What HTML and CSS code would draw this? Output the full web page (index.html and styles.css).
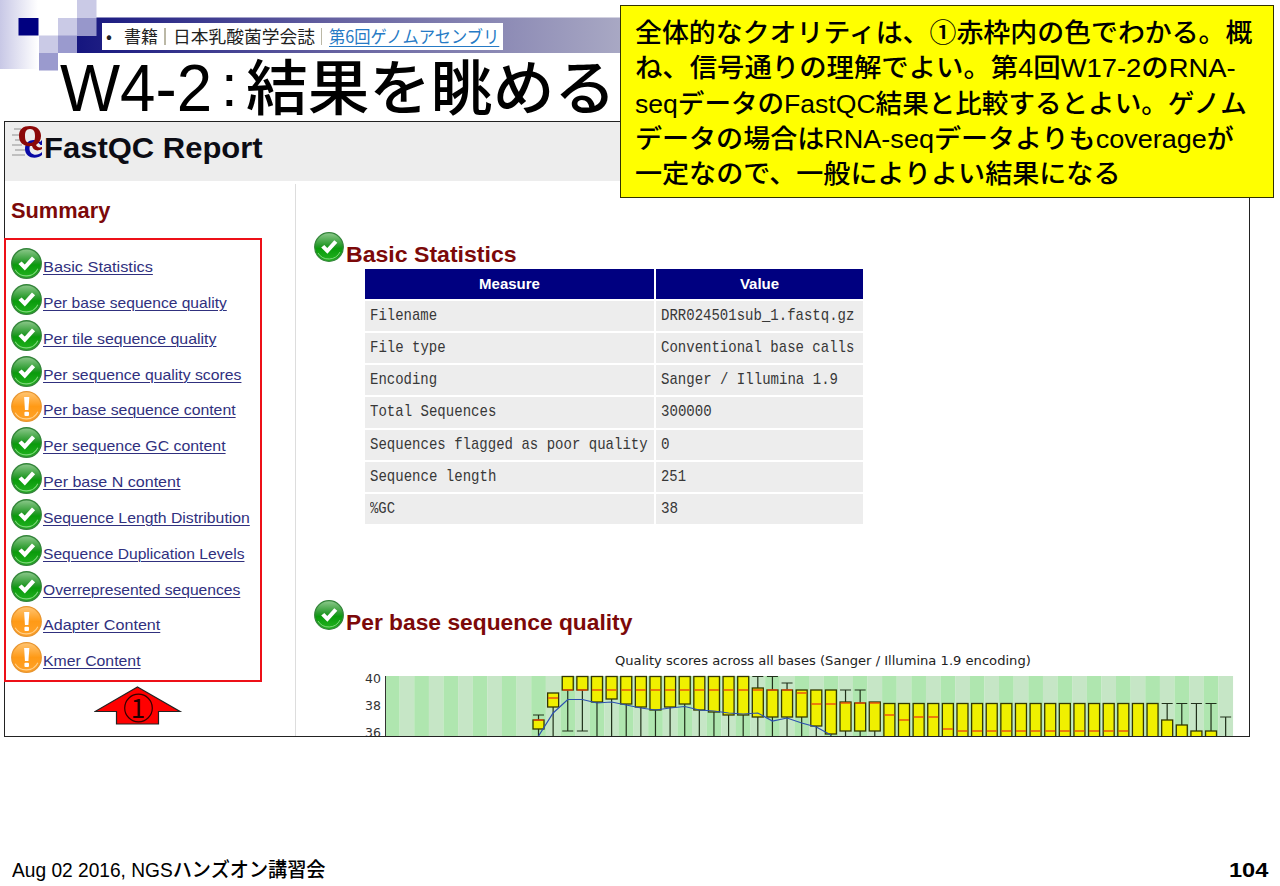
FILE: index.html
```html
<!DOCTYPE html>
<html lang="ja">
<head>
<meta charset="utf-8">
<title>FastQC Report</title>
<link rel="stylesheet" href="styles.css">
</head>
<body>
<svg class="defs" width="0" height="0" aria-hidden="true">
  <defs>
    <linearGradient id="green" x1="0" y1="0" x2="0" y2="1"><stop offset="0" stop-color="#8ec98d"/><stop offset=".45" stop-color="#279a2a"/><stop offset=".55" stop-color="#0a9b0c"/><stop offset="1" stop-color="#22b31f"/></linearGradient>
    <linearGradient id="orange" x1="0" y1="0" x2="0" y2="1"><stop offset="0" stop-color="#ffc573"/><stop offset=".5" stop-color="#ff9a16"/><stop offset="1" stop-color="#ffa22a"/></linearGradient>
    <symbol id="ok" viewBox="0 0 30 30">
      <circle cx="15" cy="15" r="14.3" fill="url(#green)" stroke="#34853a" stroke-width="1.3"/>
      <path d="M4 21a12.6 12.6 0 0 0 22-1" fill="none" stroke="#7fd57c" stroke-width="1"/>
      <path d="M7.2 15.600l3.100-2.600 3 3 7-7.800 3 2.600-9.900 11z" fill="#fff"/>
    </symbol>
    <symbol id="warn" viewBox="0 0 30 30">
      <circle cx="15" cy="15" r="14.3" fill="url(#orange)" stroke="#e8952f" stroke-width="1.2"/>
      <path d="M4 21a12.6 12.6 0 0 0 22-1" fill="none" stroke="#ffd28f" stroke-width="1"/>
      <path d="M12.7 5.8h5l-.8 12.6h-3.4z" fill="#fff"/><rect x="13" y="20" width="4.4" height="4.2" rx="1" fill="#fff"/>
    </symbol>
  </defs>
</svg>
<main class="slide">
  <svg class="deco" width="640" height="72" viewBox="0 0 640 72">
    <defs>
      <linearGradient id="fade"><stop offset="0" stop-color="#c8c8e6"/><stop offset="1" stop-color="#fff"/></linearGradient>
      <linearGradient id="bar"><stop offset="0" stop-color="#15157f"/><stop offset=".45" stop-color="#6460a0"/><stop offset="1" stop-color="#adadc6"/></linearGradient>
    </defs>
    <rect width="38" height="69" fill="url(#fade)"/>
    <rect x="77" y="17.5" width="563" height="35.5" fill="url(#bar)"/>
    <rect x="18.5" y="18" width="20" height="17.5" fill="#000080"/>
    <rect x="77" y="0" width="19.500" height="18" fill="#cacae6"/>
    <rect x="77" y="18" width="19.500" height="18" fill="#9797cb"/>
    <rect x="58" y="18" width="19" height="18" fill="#cacae6"/>
    <rect x="39" y="35.500" width="19" height="17.500" fill="#cacae6"/>
    <rect x="58" y="35.500" width="19" height="17.500" fill="#9a9ace"/>
    <rect x="39" y="53" width="19" height="17.500" fill="#9a9ace"/>
  </svg>
  <div class="crumbs"><span class="dot">•</span><span class="fit" data-w="34">書籍</span><i></i><span class="fit" data-w="142">日本乳酸菌学会誌</span><i></i><a class="fit" data-w="170">第6回ゲノムアセンブリ</a></div>
  <h1 class="title"><span class="fit latin" data-w="152">W4-2</span><span class="colon">:</span><span class="fit" data-w="370">結果を眺める</span></h1>

  <section class="report">
    <header class="report-head">
      <svg class="logo" width="32" height="36" viewBox="0 0 32 36">
        <path d="M2 4h7M0 10h9M3 15h8M0 20h10M3 25h10M0 30h13" stroke="#b0b0b0" stroke-width="1.300"/>
        <path d="M30 15v5h-1.500c-3-5-11-4-11 3.500 0 7 8 8 12.500 3.500v3c-6 5-17 3-17-6 0-9 9-11 15-7z" fill="#0909a5"/>
        <path fill-rule="evenodd" d="M18 1c7 0 11 4 11 10 0 4-2 7-5 9 1 2 3 3 6 2v2c-5 3-9 1-10-3C12 22 7 18 7 11S11 1 18 1zm0 3c-4 0-5 3-5 7s1 7 5 7 5-3 5-7-1-7-5-7z" fill="#8b0808"/>
      </svg>
      <span class="fit" data-w="219">FastQC Report</span>
    </header>
    <div class="report-body">
      <nav class="summary">
        <h2><span class="fit" data-w="99">Summary</span></h2>
        <ul id="links"></ul>
      </nav>
      <div class="content">
        <h2 class="module"><svg width="30" height="30"><use href="#ok"/></svg><span class="fit" data-w="171">Basic Statistics</span></h2>
        <table>
          <thead><tr><th><span class="fit" data-w="61">Measure</span></th><th><span class="fit" data-w="39">Value</span></th></tr></thead>
          <tbody id="stats"></tbody>
        </table>
        <h2 class="module second"><svg width="30" height="30"><use href="#ok"/></svg><span class="fit" data-w="286">Per base sequence quality</span></h2>
        <div class="chart-title"><span class="fit" data-w="416">Quality scores across all bases (Sanger / Illumina 1.9 encoding)</span></div>
        <svg id="chart" width="890" height="66" viewBox="360 670 890 66"></svg>
      </div>
    </div>
  </section>

  <div class="frame"></div>
  <svg class="arrow" width="90" height="42" viewBox="0 0 90 42">
    <path d="M43.500 2L86 26.500H64.500V39H22.500V26.500H1Z" fill="#f00" stroke="#222" stroke-width="1.200"/>
    <circle cx="44.500" cy="23" r="13.800" fill="none" stroke="#300" stroke-width="1.200"/>
    <text x="44" y="32.500" text-anchor="middle">1</text>
  </svg>
  <aside class="note">
    <p><span class="fit" data-w="617">全体的なクオリティは、①赤枠内の色でわかる。概</span></p>
    <p><span class="fit" data-w="601">ね、信号通りの理解でよい。第4回W17-2のRNA-</span></p>
    <p><span class="fit" data-w="612">seqデータのFastQC結果と比較するとよい。ゲノム</span></p>
    <p><span class="fit" data-w="599">データの場合はRNA-seqデータよりもcoverageが</span></p>
    <p><span class="fit" data-w="485">一定なので、一般によりよい結果になる</span></p>
  </aside>
  <footer class="foot"><span class="fit" data-w="314">Aug 02 2016, NGSハンズオン講習会</span><b class="fit" data-w="39">104</b></footer>
</main>
<script src="page.js"></script>
</body>
</html>
```
FILE: styles.css
```css
* { box-sizing: border-box; }
body { margin: 0; background: #fff; font-family: "Liberation Sans", "Noto Sans CJK JP", sans-serif; color: #000; }
.defs, .deco { position: absolute; left: 0; top: 0; }
.slide { position: relative; width: 1280px; height: 886px; overflow: hidden; display: flex; flex-direction: column; }
.fit { display: inline-block; white-space: nowrap; transform-origin: 0 50%; }
.crumbs { position: relative; z-index: 1; display: flex; width: 401px; height: 27px; margin: 23px 0 0 102px; padding-left: 4px; background: #fff; font: 17.500px/25px "Noto Sans CJK JP", sans-serif; color: #222; flex: none; }
.crumbs .dot { width: 18px; }
.crumbs i { width: 1.500px; height: 17px; margin: 5px 7px 0 6px; background: #bbb8a6; flex: none; }
.crumbs a { color: #267ac5; text-decoration: underline; text-underline-offset: 3px; }
.title { position: relative; display: flex; height: 71px; margin: 0 0 0 60px; font: 500 60px/71px "Noto Sans CJK JP", sans-serif; flex: none; }
.title .latin { font: 400 67px/75px "Liberation Sans", sans-serif; }
.title .colon { width: 34px; padding-left: 9px; font: 400 60px/71px "Liberation Sans", sans-serif; }
.title .fit:last-child { line-height: 67px; }
.report { width: 1246px; height: 616px; margin-left: 4px; border: 1.300px solid #222; overflow: hidden; flex: none; background: #fff; }
.report-head { display: flex; height: 59px; background: #ededed; padding: 3px 0 0 7px; font: 700 30px/46px "Liberation Sans", sans-serif; color: #0c0c14; }
.logo { flex: none; }
.report-body { display: flex; height: 556px; }
.summary { width: 291px; margin-top: 3px; padding-left: 6px; border-right: 1.500px solid #ddd; flex: none; }
h2 { margin: 0; font: 700 22px/30px "Liberation Sans", sans-serif; color: #7c0909; }
.summary h2 { padding-top: 12px; height: 64px; }
.summary ul { margin: 0; padding: 0; list-style: none; }
.summary li { display: flex; height: 35.850px; }
.summary li svg { width: 31px; height: 31px; flex: none; margin-right: 1px; }
.summary a { font: 15px/19px "Liberation Sans", sans-serif; color: #30307e; text-decoration: underline; text-decoration-thickness: 1px; text-underline-offset: 1.500px; margin-top: 9px; height: 20px; }
.content { padding: 51px 0 0 18px; width: 953px; }
.module { display: flex; height: 37px; align-items: flex-start; }
.module svg { flex: none; margin-right: 2px; }
.module .fit { margin-top: 8px; }
table { margin-left: 51px; border-collapse: separate; border-spacing: 0; width: 498px; table-layout: fixed; }
th { height: 30px; padding: 0; background: #000080; color: #fff; font: 700 15px/20px "Liberation Sans", sans-serif; }
th:first-child, td:first-child { width: 291px; border-right: 2px solid #fff; }
td { height: 32.150px; padding: 0 0 0 5px; background: #ededed; border-top: 2px solid #fff; font: 17px/26px "Liberation Mono", monospace; color: #383838; }
td .fit { vertical-align: top; }
.second { margin-top: 76px; }
.chart-title { margin: 15px 0 0 301px; height: 18px; font: 12.500px/18px "DejaVu Sans", sans-serif; color: #222; }
#chart { display: block; margin-left: 46px; }
#chart text { font: 12.500px "DejaVu Sans", sans-serif; fill: #333; }
.frame { position: absolute; left: 4px; top: 238px; width: 258px; height: 444px; border: 2.500px solid #ed1018; }
.arrow { position: absolute; left: 94px; top: 685px; }
.arrow text { font: 26px "Noto Sans CJK JP", sans-serif; fill: #200; }
.note { position: absolute; left: 620px; top: 5px; width: 654px; height: 193px; padding: 10px 0 0 14px; background: #ff0; border: 1.500px solid #333300; }
.note p { margin: 0; height: 35.300px; font: 500 26px/35.300px "Liberation Sans", "Noto Sans CJK JP", sans-serif; }
.foot { display: flex; justify-content: space-between; padding: 0 12px; margin-top: 118px; font: 500 20px/30px "Liberation Sans", "Noto Sans CJK JP", sans-serif; }
.foot b { transform-origin: 100% 50%; }
```
FILE: page.js
```js
const links = [
  ['Basic Statistics', 110], ['Per base sequence quality', 184], ['Per tile sequence quality', 173],
  ['Per sequence quality scores', 198], ['Per base sequence content', 193, 1], ['Per sequence GC content', 183],
  ['Per base N content', 137], ['Sequence Length Distribution', 207], ['Sequence Duplication Levels', 201],
  ['Overrepresented sequences', 197], ['Adapter Content', 117, 1], ['Kmer Content', 98, 1]
];
document.getElementById('links').innerHTML = links.map(([t, w, warn]) =>
  `<li><svg><use href="#${warn ? 'warn' : 'ok'}"/></svg><a class="fit" data-w="${w}">${t}</a></li>`).join('');

const stats = [
  ['Filename', 'DRR024501sub_1.fastq.gz'], ['File type', 'Conventional base calls'],
  ['Encoding', 'Sanger / Illumina 1.9'], ['Total Sequences', '300000'],
  ['Sequences flagged as poor quality', '0'], ['Sequence length', '251'], ['%GC', '38']
];
const cell = t => `<td><span class="fit" data-w="${(t.length * 8.42).toFixed(1)}">${t}</span></td>`;
document.getElementById('stats').innerHTML = stats.map(r => `<tr>${r.map(cell).join('')}</tr>`).join('');

// Box plot rows: [box top, box bottom, median, upper whisker, lower whisker]
const B = 745;
const boxes = [
  [720, 729, 720, 715], [693, 707, 698], [676.5, 690, 690, 0, 731], [676.5, 690, 690, 0, 731],
  [676.5, 702, 690], [676.5, 699, 690], [676.5, 704, 690], [676.5, 707, 690], [676.5, 710, 690],
  [676.5, 707, 690], [676.5, 704, 690], [676.5, 710, 690], [676.5, 712, 690], [676.5, 715, 690],
  [676.5, 715, 690], [688, 717, 690, 676.5], [690, 717, 690, 676.5], [690, 717, 690, 683],
  [690, 717, 693], [690, 726, 704], [690, 734, 704], [702, 731, 703, 690], [703, 731, 703, 690],
  [702, 731, 703], [703.5, B, 715], [703.5, B, 720], [703.5, B, 717], [703.5, B, 717], [703.5, B, 729]
];
for (let i = 39; i < 51; i++) boxes.push([703.5, B, 731]);
boxes.push([703.5, B, B], [703.5, B, B], [720, B, B, 703.5], [725, B, B, 703.5], [731, B, B, 703.5], [731, B, B, 703.5], [B, B, B, 717]);

const step = 14.62, x0 = 385;
let s = '';
for (let i = 0; i < 58; i++)
  s += `<rect x="${x0 + i * step}" y="676" width="${step + .1}" height="62" fill="${i % 2 ? '#c6e6c6' : '#afe6af'}"/>`;
s += '<path d="M385.500 676V740" stroke="#333" fill="none"/>';
boxes.forEach(([t, b, m, up, low], k) => {
  const c = x0 + (k + 10.5) * step, l = c - 5.5;
  let d = `M${c} ${b}V${low || B}`;
  if (up) d += `M${c} ${t}V${up}M${l} ${up}h11`;
  if (low) d += `M${l} ${low}h11`;
  s += `<path d="${d}" stroke="#20301a" stroke-width="1.200" fill="none"/>`;
  if (t < B) s += `<rect x="${l}" y="${t}" width="11" height="${b - t}" fill="#f0f000" stroke="#333800" stroke-width="1.300"/>`;
  s += `<path d="M${l + .5} ${m}h10" stroke="#e84a10" stroke-width="1.400"/>`;
});
const mean = [736, 713, 699.5, 699.5, 703, 702, 705, 708, 710, 708, 706.5, 710, 711, 713, 714, 713, 721, 718, 723, 727, 735];
s += `<polyline fill="none" stroke="#2c50b0" stroke-width="1.200" points="${mean.map((y, k) => `${x0 + (k + 10.5) * step},${y}`).join(' ')}"/>`;
[[40, 682.5], [38, 709.5], [36, 736.5]].forEach(([n, y]) => { s += `<text x="365" y="${y}">${n}</text>`; });
document.getElementById('chart').innerHTML = s;

document.querySelectorAll('.fit').forEach(e => {
  const n = e.offsetWidth, w = +e.dataset.w;
  e.style.transform = `scaleX(${w / n})`;
  if (!e.closest('th') && !e.closest('.foot b')) e.style.marginRight = `${w - n + (parseFloat(getComputedStyle(e).marginRight) || 0)}px`;
  if (e.closest('th')) e.style.transformOrigin = '50% 50%';
});
```
